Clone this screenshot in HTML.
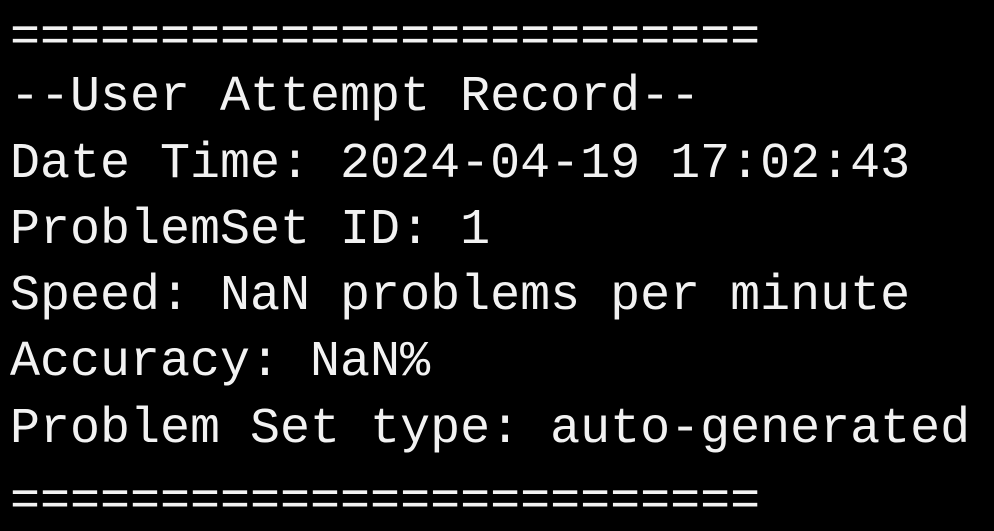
<!DOCTYPE html>
<html><head><meta charset="utf-8"><style>
html,body{margin:0;padding:0;background:#000;width:994px;height:518px;overflow:hidden}
pre{margin:0;position:absolute;left:10px;top:-1px;font-family:"Liberation Mono",monospace;font-size:50px;line-height:66.3px;color:#f2f2f2}
.eq{position:relative;top:7px}
</style></head><body><pre><span class="eq">=========================</span>
--User Attempt Record--
Date Time: 2024-04-19 17:02:43
ProblemSet ID: 1
Speed: NaN problems per minute
Accuracy: NaN%
Problem Set type: auto-generated
<span class="eq">=========================</span></pre></body></html>
